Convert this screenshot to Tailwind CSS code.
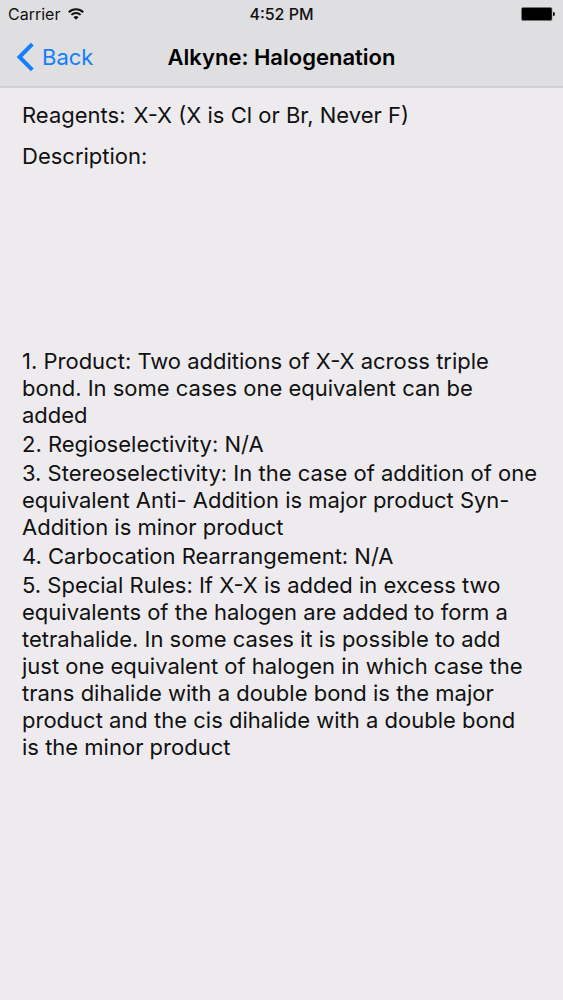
<!DOCTYPE html>
<html lang="en">
<head>
  <meta charset="UTF-8">
  <title>Alkyne: Halogenation</title>
  <meta name="viewport" content="width=device-width, initial-scale=1.0">
  <script src="https://cdn.jsdelivr.net/npm/@tailwindcss/browser@4"></script>
</head>
<body class="min-h-screen bg-[#edebee] font-[Inter,sans-serif] text-[#111111]">
  <header class="border-b-2 border-[#d0cfd2] bg-[#dfdee1]">
    <div class="grid h-7 grid-cols-3 items-center px-2 text-base">
      <div class="flex items-center gap-2">
        <span>Carrier</span>
        <svg class="h-3 w-4" viewBox="0 0 16 12" fill="none" stroke="#111" stroke-width="2" aria-hidden="true">
          <path d="M0.8 4.2a10.2 10.2 0 0 1 14.4 0M3.4 6.9a6.5 6.5 0 0 1 9.2 0"/>
          <path d="M8 11.8 5.5 9.2a3.5 3.5 0 0 1 5 0z" fill="#111" stroke="none"/>
        </svg>
      </div>
      <span class="text-center font-medium">4:52 PM</span>
      <svg class="h-[14px] w-[34px] justify-self-end" viewBox="0 0 34 14" aria-hidden="true">
        <rect x="0.5" y="0.5" width="30.5" height="13" rx="1.5" fill="#000" stroke="#77767a" stroke-width="0.6"/>
        <path d="M32 5a2 2 0 0 1 0 4z" fill="#000"/>
      </svg>
    </div>
    <nav class="grid h-[58px] grid-cols-[1fr_auto_1fr] items-center px-4">
      <a href="#" class="flex items-center gap-2 text-[22px] text-[#147efb]">
        <svg class="h-8 w-[18px]" viewBox="0 0 18 32" fill="none" stroke="currentColor" stroke-width="4" aria-hidden="true">
          <path d="M16.3 3.2 3.5 16l12.8 12.8"/>
        </svg>
        Back
      </a>
      <h1 class="text-[22px] font-semibold text-black">Alkyne: Halogenation</h1>
    </nav>
  </header>
  <main class="px-[22px] pt-[14px] text-[22px] leading-[27px]">
    <p class="flex gap-2"><span>Reagents:</span><span>X-X (X is Cl or Br, Never F)</span></p>
    <h2 class="mt-[14px]">Description:</h2>
    <div class="mt-[178px] space-y-0.5">
      <p>1. Product: Two additions of X-X across triple<br>bond. In some cases one equivalent can be<br>added</p>
      <p>2. Regioselectivity: N/A</p>
      <p>3. Stereoselectivity: In the case of addition of one<br>equivalent Anti- Addition is major product Syn-<br>Addition is minor product</p>
      <p>4. Carbocation Rearrangement: N/A</p>
      <p>5. Special Rules: If X-X is added in excess two<br>equivalents of the halogen are added to form a<br>tetrahalide. In some cases it is possible to add<br>just one equivalent of halogen in which case the<br>trans dihalide with a double bond is the major<br>product and the cis dihalide with a double bond<br>is the minor product</p>
    </div>
  </main>
</body>
</html>
